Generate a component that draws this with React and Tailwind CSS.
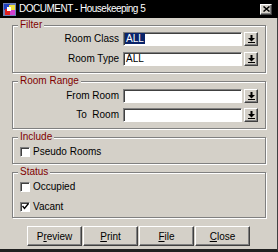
import React from "react";

const raised =
  "bg-[#d4d0c8] border border-t-white border-l-white border-r-[#404040] border-b-[#404040] shadow-[inset_-1px_-1px_0_#808080]";

// small "pick" arrow used on the combo buttons
function PickButton() {
  return (
    <div className={"ml-[2px] w-[14px] h-[14px] flex items-center justify-center " + raised}>
      <svg width="7" height="8" viewBox="0 0 7 8">
        <rect x="2.5" y="0" width="2" height="3" fill="#000" />
        <polygon points="0,3 7,3 3.5,6.5" fill="#000" />
        <rect x="0" y="7" width="7" height="1" fill="#000" />
      </svg>
    </div>
  );
}

function Field({ label, value, selected, first }) {
  return (
    <div className={"flex items-center " + (first ? "" : "mt-[5px]")}>
      <span className="w-[106px] text-right pr-[0px] whitespace-pre">{label}</span>
      <div className="ml-[4px] w-[119px] h-[14px] bg-white border border-t-[#808080] border-l-[#808080] border-r-white border-b-white shadow-[inset_1px_1px_0_#404040] flex items-center pl-[1px]">
        {selected ? (
          <span className="bg-[#0a246a] text-white leading-[11px] px-[1px]">{value}</span>
        ) : (
          <span className="leading-[11px] px-[1px]">{value}</span>
        )}
      </div>
      <PickButton />
    </div>
  );
}

function Check({ label, checked, className }) {
  return (
    <div className={"flex items-center h-[13px] ml-[7px] " + className}>
      <div className="w-[10px] h-[10px] bg-white border border-t-[#808080] border-l-[#808080] border-r-white border-b-white shadow-[inset_1px_1px_0_#404040] flex items-center justify-center">
        {checked && (
          <svg width="7" height="7" viewBox="0 0 7 7">
            <polyline points="0.5,3 2.5,5.5 6.5,0.5" fill="none" stroke="#000" strokeWidth="1.4" />
          </svg>
        )}
      </div>
      <span className="ml-[3px]">{label}</span>
    </div>
  );
}

function Group({ title, className, children }) {
  return (
    <fieldset
      className={
        "border border-[#808080] shadow-[inset_1px_1px_0_#fff,1px_1px_0_#fff] min-w-0 " + className
      }
    >
      <legend className="ml-[5px] px-[2px] leading-[12px] text-[#800000] bg-[#d4d0c8]">{title}</legend>
      {children}
    </fieldset>
  );
}

function Btn({ children }) {
  return (
    <button className={"w-[55px] h-[20px] flex items-center justify-center " + raised}>
      {children}
    </button>
  );
}

export default function App() {
  return (
    <div
      className="w-[278px] h-[252px] bg-[#d4d0c8] flex flex-col text-[10px] text-black"
      style={{ fontFamily: '"Liberation Sans", Arial, sans-serif' }}
    >
      {/* title bar */}
      <div className="h-[18px] bg-black flex items-center shrink-0">
        <svg className="ml-[3px]" width="13" height="13" viewBox="0 0 13 13">
          <rect x="0" y="0" width="13" height="13" fill="#6b7fb8" />
          <rect x="1" y="1" width="6" height="6" fill="#2040c0" />
          <rect x="6" y="2" width="6" height="5" fill="#f0e040" />
          <rect x="2" y="6" width="5" height="6" fill="#e02020" />
          <rect x="7" y="7" width="5" height="5" fill="#d040d0" />
          <rect x="4" y="4" width="4" height="4" fill="#fff" />
        </svg>
        <span className="ml-[3px] text-white tracking-[-0.5px] leading-[12px]">DOCUMENT - Housekeeping 5</span>
        <div className={"ml-auto mr-[6px] w-[12px] h-[11px] flex items-center justify-center " + raised}>
          <svg width="7" height="6" viewBox="0 0 7 6">
            <path d="M0.5 0.5 L6.5 5.5 M6.5 0.5 L0.5 5.5" stroke="#000" strokeWidth="1.5" />
          </svg>
        </div>
      </div>

      {/* body */}
      <div className="flex-1 flex flex-col pt-[1px] pl-[12px] pr-[11px] border-r border-b-[3px] border-r-[#404040] border-b-[#202020]">
        <Group title="Filter" className="pb-[6px]">
          <Field label="Room Class" value="ALL" selected first />
          <Field label="Room Type" value="ALL" />
        </Group>

        <Group title="Room Range" className="mt-[2px] pb-[6px]">
          <div className="mt-[1px]">
            <Field label="From Room" value="" first />
          </div>
          <div className="-mt-[1px]">
            <Field label="To  Room" value="" />
          </div>
        </Group>

        <Group title="Include" className="mt-[2px] pb-[5px]">
          <Check label="Pseudo Rooms" className="mt-[2px]" />
        </Group>

        <Group title="Status" className="mt-[2px] pb-[4px]">
          <Check label="Occupied" className="mt-[2px]" />
          <Check label="Vacant" checked className="mt-[7px]" />
        </Group>

        <div className="mt-[8px] ml-[15px] flex gap-[1px]">
          <Btn>
            P<u>r</u>eview
          </Btn>
          <Btn>
            <u>P</u>rint
          </Btn>
          <Btn>
            <u>F</u>ile
          </Btn>
          <Btn>
            <u>C</u>lose
          </Btn>
        </div>
      </div>
    </div>
  );
}
